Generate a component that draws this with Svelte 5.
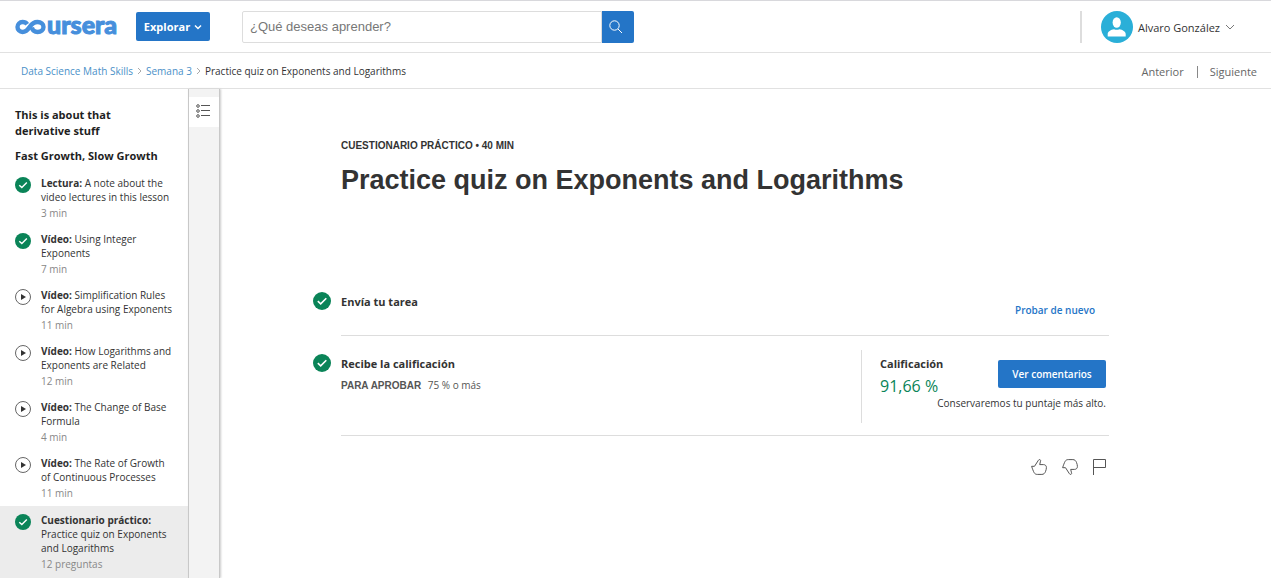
<script>
  const lessons = [
    { kind: 'Lectura:', title: 'A note about the video lectures in this lesson', meta: '3 min', done: true },
    { kind: 'Vídeo:', title: 'Using Integer Exponents', meta: '7 min', done: true },
    { kind: 'Vídeo:', title: 'Simplification Rules for Algebra using Exponents', meta: '11 min' },
    { kind: 'Vídeo:', title: 'How Logarithms and Exponents are Related', meta: '12 min' },
    { kind: 'Vídeo:', title: 'The Change of Base Formula', meta: '4 min' },
    { kind: 'Vídeo:', title: 'The Rate of Growth of Continuous Processes', meta: '11 min' },
    { kind: 'Cuestionario práctico:', title: 'Practice quiz on Exponents and Logarithms', meta: '12 preguntas', done: true, active: true }
  ];
  let query = $state('');
</script>

{#snippet check(size)}
  <svg class="check" width={size} height={size} viewBox="0 0 18 18" aria-hidden="true">
    <circle cx="9" cy="9" r="9" fill="#0a8458" />
    <path d="M4.800 9.200l2.900 2.700 5.600-5.600" fill="none" stroke="#fff" stroke-width="1.600" />
  </svg>
{/snippet}

<div class="page">
  <header class="topbar">
    <a class="logo" href="#home" aria-label="coursera">
      <svg width="32" height="16" viewBox="0 0 32 16" aria-hidden="true">
        <path d="M12.200 5.200C11.200 3.700 9.700 3 7.500 3a5 5 0 0 0 0 10c3.600 0 5.500-2.400 7.300-5.200C16.600 5 18.600 3 22.500 3c3.600 0 6 2.200 6 5s-2.400 5-6 5c-3 0-5-1.800-5.600-4.400" fill="none" stroke="currentColor" stroke-width="4.400" />
      </svg>
      <span>ursera</span>
    </a>
    <button class="explore" type="button">
      Explorar
      <svg width="8" height="6" viewBox="0 0 8 6" aria-hidden="true"><path d="M1 1.500l3 3 3-3" fill="none" stroke="#fff" stroke-width="1.500" /></svg>
    </button>
    <form class="search" onsubmit={(e) => e.preventDefault()}>
      <input type="text" aria-label="Buscar" placeholder="¿Qué deseas aprender?" bind:value={query} />
      <button type="submit" aria-label="Buscar">
        <svg width="14" height="14" viewBox="0 0 14 14" aria-hidden="true"><circle cx="5.500" cy="5.500" r="4.700" fill="none" stroke="#fff" /><path d="M9 9l4 4" stroke="#fff" /></svg>
      </button>
    </form>
    <button class="user" type="button">
      <svg width="32" height="32" viewBox="0 0 32 32" aria-hidden="true">
        <circle cx="16" cy="16" r="16" fill="#2aafd8" />
        <ellipse cx="15.700" cy="11.500" rx="4.100" ry="5.200" fill="#fff" />
        <path d="M6.700 25.500v-2.600c0-2.300 3.300-4.200 6.300-4.700q2.700 1.200 5.400 0c3 .5 6.300 2.400 6.300 4.700v2.600z" fill="#fff" />
      </svg>
      <span>Alvaro González</span>
      <svg class="caret" width="10" height="6" viewBox="0 0 10 6" aria-hidden="true"><path d="M1 1l4 4 4-4" fill="none" stroke="#555" stroke-width=".8" /></svg>
    </button>
  </header>

  <div class="subbar">
    <nav class="crumbs" aria-label="Ruta">
      <a href="#course">Data Science Math Skills</a>
      <svg width="5" height="8" viewBox="0 0 5 8" aria-hidden="true"><path d="M1 1l3 3-3 3" fill="none" stroke="#aaa" /></svg>
      <a href="#week">Semana 3</a>
      <svg width="5" height="8" viewBox="0 0 5 8" aria-hidden="true"><path d="M1 1l3 3-3 3" fill="none" stroke="#aaa" /></svg>
      <span>Practice quiz on Exponents and Logarithms</span>
    </nav>
    <nav class="pager" aria-label="Páginas">
      <a href="#prev">Anterior</a>
      <a href="#next">Siguiente</a>
    </nav>
  </div>

  <div class="body">
    <aside>
      <h2>This is about that derivative stuff</h2>
      <h2>Fast Growth, Slow Growth</h2>
      <ul>
        {#each lessons as item}
          <li class:active={item.active}>
            {#if item.done}
              {@render check(16)}
            {:else}
              <svg class="check" width="16" height="16" viewBox="0 0 16 16" aria-hidden="true">
                <circle cx="8" cy="8" r="7.500" fill="#fff" stroke="#555" stroke-width=".9" />
                <path d="M6 4.900v6.200l5-3.100z" fill="#333" />
              </svg>
            {/if}
            <a href="#lesson"><b>{item.kind}</b> {item.title}<small>{item.meta}</small></a>
          </li>
        {/each}
      </ul>
    </aside>
    <div class="rail">
      <button type="button" aria-label="Lecciones">
        <svg width="14" height="14" viewBox="0 0 14 14" fill="none" stroke="#555" aria-hidden="true">
          <circle cx="2" cy="2" r="1.300" /><circle cx="2" cy="7" r="1.300" /><circle cx="2" cy="12" r="1.300" />
          <path d="M5 1.500h9M5 6.500h9M5 11.500h9" />
        </svg>
      </button>
    </div>
    <main>
      <p class="eyebrow">CUESTIONARIO PRÁCTICO • 40 MIN</p>
      <h1>Practice quiz on Exponents and Logarithms</h1>

      <section class="step submit">
        <div class="mark">{@render check(18)}</div>
        <h3>Envía tu tarea</h3>
        <button class="link" type="button">Probar de nuevo</button>
      </section>

      <section class="step result">
        <div class="mark">{@render check(18)}</div>
        <div>
          <h3>Recibe la calificación</h3>
          <p class="pass"><b>PARA APROBAR</b> 75 % o más</p>
        </div>
        <div class="grade">
          <div class="score">
            <h3>Calificación</h3>
            <p>91,66 %</p>
          </div>
          <button class="primary" type="button">Ver comentarios</button>
          <p class="note">Conservaremos tu puntaje más alto.</p>
        </div>
      </section>

      <div class="feedback">
        <button type="button" aria-label="Me gusta">
          <svg width="16" height="16" viewBox="0 0 16 16" aria-hidden="true"><path d="M.6 7.300H3.500L7.200 1.600c.4-.7.8-1 1.400-1 .9 0 1.200.8.9 1.600L8.700 5.600h3.700c1.800 0 3 1.100 3 2.800 0 1.300-.3 2.600-.8 3.900-.7 2-1.900 3.100-3.700 3.100H6.300c-1.600 0-2.500-.6-3.200-1.800C2.200 12 1.500 9.900.6 7.300z" /></svg>
        </button>
        <button type="button" aria-label="No me gusta">
          <svg width="16" height="16" viewBox="0 0 16 16" aria-hidden="true"><path d="M.6 8.700H3.500L7.200 14.400c.4.700.8 1 1.400 1 .9 0 1.200-.8.900-1.600L8.700 10.400h3.700c1.800 0 3-1.100 3-2.800 0-1.300-.3-2.600-.8-3.900C13.900 1.700 12.700.6 10.900.6H6.300C4.700.6 3.800 1.200 3.100 2.400 2.200 4 1.500 6.100.6 8.700z" /></svg>
        </button>
        <button type="button" aria-label="Denunciar">
          <svg width="14" height="16" viewBox="0 0 14 16" aria-hidden="true"><path d="M.5 16V.5h12v8H.5" /></svg>
        </button>
      </div>
    </main>
  </div>
</div>

<style>
  :global(body) { margin: 0; background: #fff; }
  .page {
    height: 100vh;
    display: flex;
    flex-direction: column;
    overflow: hidden;
    font-family: "Open Sans", sans-serif;
    font-size: 10px;
    color: #333;
  }
  .page * { box-sizing: border-box; }
  button { font: inherit; border: 0; background: none; padding: 0; color: inherit; cursor: pointer; }
  a { color: inherit; text-decoration: none; }
  h1, h2, h3, p, ul { margin: 0; padding: 0; }
  svg { flex: none; display: block; }

  .topbar {
    flex: none;
    display: flex;
    align-items: center;
    height: 53px;
    padding: 0 36px 0 15px;
    border-top: 1px solid #d8d8dc;
    border-bottom: 1px solid #e1e1e1;
  }
  .logo { display: flex; align-items: center; width: 103px; color: #468fdc; }
  .logo span { font: 900 25px/26px Lato, sans-serif; margin-top: -6px; -webkit-text-stroke: 1px currentColor; }
  .explore {
    display: flex;
    align-items: center;
    justify-content: center;
    gap: 4px;
    width: 74px;
    height: 29px;
    margin: 0 32px 0 18px;
    border-radius: 2px;
    background: #2475c7;
    color: #fff;
    font-size: 11px;
    font-weight: 700;
  }
  .search { display: flex; width: 392px; height: 32px; }
  .search input {
    flex: 1;
    min-width: 0;
    padding: 0 7px;
    border: 1px solid #ddd;
    border-radius: 2px 0 0 2px;
    font: 13px "Liberation Sans", sans-serif;
    color: #333;
  }
  .search input::placeholder { color: #777; opacity: 1; }
  .search button {
    display: grid;
    place-items: center;
    width: 32px;
    padding-right: 4px;
    border-radius: 0 2px 2px 0;
    background: #2475c7;
  }
  .user {
    display: flex;
    align-items: center;
    gap: 5px;
    height: 32px;
    margin-left: auto;
    padding-left: 19px;
    border-left: 2px solid #ddd;
    font-size: 11px;
  }
  .user span { padding-top: 2px; }

  .subbar {
    flex: none;
    display: flex;
    align-items: center;
    justify-content: space-between;
    height: 36px;
    padding: 0 14px 0 21px;
    border-bottom: 1px solid #e1e1e1;
  }
  .crumbs { display: flex; align-items: center; gap: 4px; }
  .crumbs a { color: #4a90c8; }
  .pager { display: flex; align-items: center; padding-top: 2px; font-size: 11px; line-height: 12px; color: #666; }
  .pager a + a { margin-left: 13px; padding-left: 12px; border-left: 1px solid #888; }

  .body { flex: 1; min-height: 0; display: flex; }
  aside { flex: none; width: 188px; padding-top: 18px; overflow: hidden; }
  h2 { margin: 0 24px 9px 15px; font-size: 11px; line-height: 16px; color: #1f1f1f; }
  aside ul { list-style: none; margin-top: -3px; }
  li { display: flex; gap: 10px; padding: 6px 15px; line-height: 14px; }
  li .check { margin-top: 1px; }
  li a { display: block; }
  li small { display: block; margin-top: 2px; font-size: 10px; color: #888; }
  li.active { padding: 7px 15px 8px; background: #ececec; }
  .rail {
    flex: none;
    width: 32px;
    padding-top: 8px;
    border-left: 1px solid #c8c8c8;
    border-right: 1px solid #c8c8c8;
    background: #f3f3f3;
    box-shadow: 1px 0 2px #ccc;
  }
  .rail button { display: grid; place-items: center; width: 100%; height: 30px; padding: 0 3px 2px 0; background: #fff; }

  main { flex: 1; min-width: 0; padding: 50px 162px 0 121px; }
  .eyebrow { font: 700 10px/14px "Liberation Sans", sans-serif; }
  h1 { margin-top: 11px; font: 700 27px/32px "Liberation Sans", sans-serif; }
  h3 { font-size: 11px; line-height: 16px; }
  .step { display: flex; align-items: flex-start; border-bottom: 1px solid #ddd; }
  .mark { width: 28px; margin: -2px 0 0 -28px; }
  .submit { margin-top: 98px; height: 42px; }
  .link { margin: 8px 14px 0 auto; font-weight: 600; font-size: 10px; line-height: 16px; color: #2475c7; }
  .result { height: 100px; padding-top: 20px; }
  .pass { margin-top: 6px; line-height: 14px; color: #555; }
  .pass b { margin-right: 4px; font-family: "Liberation Sans", sans-serif; }
  .grade {
    display: grid;
    grid-template-columns: 1fr auto;
    align-content: start;
    width: 248px;
    height: 73px;
    margin: -6px 0 0 auto;
    padding: 6px 3px 0 18px;
    border-left: 1px solid #ddd;
  }
  .score p { margin-top: 4px; font-size: 16px; line-height: 20px; color: #0a8458; }
  .primary {
    width: 108px;
    height: 28px;
    margin-top: 4px;
    border-radius: 2px;
    background: #2475c7;
    color: #fff;
    font-size: 10px;
    font-weight: 600;
  }
  .note { grid-column: 1 / -1; justify-self: end; line-height: 14px; }
  .feedback { display: flex; justify-content: flex-end; gap: 15px; margin: 23px 2px 0 0; }
  .feedback svg { fill: none; stroke: #555; stroke-width: 1; }
</style>
